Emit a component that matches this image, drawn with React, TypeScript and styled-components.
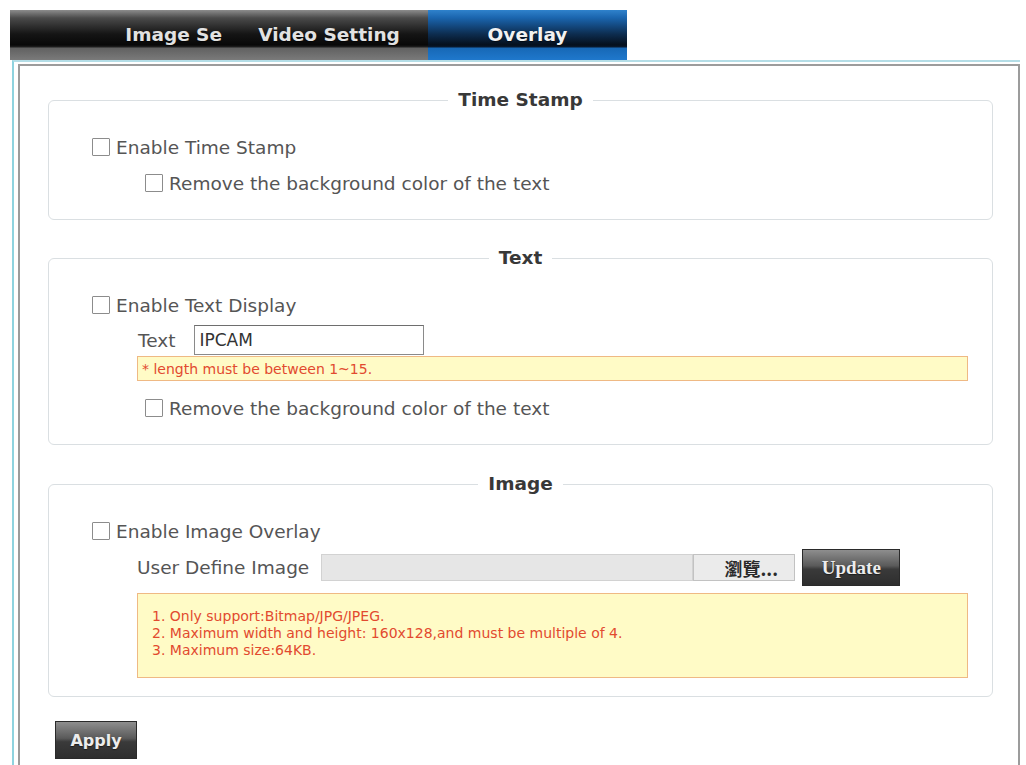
import React from "react";
import styled, { createGlobalStyle } from "styled-components";

const GlobalStyle = createGlobalStyle`
  body {
    margin: 0;
    background: #fff;
    font-family: "DejaVu Sans", Verdana, sans-serif;
  }
`;

const App: React.FC = () => {
  return (
    <>
      <GlobalStyle />
      <Page>
        <TabBar>
          <Tab $width={220} $align="flex-end">
            Image Se
          </Tab>
          <Tab $width={198}>Video Setting</Tab>
          <Tab $width={199} $active>
            Overlay
          </Tab>
        </TabBar>
        <Panel>
          <PanelInner>
            <Group>
              <Legend>Time Stamp</Legend>
              <GroupBody>
                <CheckRow>
                  <Checkbox type="checkbox" />
                  <span>Enable Time Stamp</span>
                </CheckRow>
                <CheckRow $indent={53}>
                  <Checkbox type="checkbox" />
                  <span>Remove the background color of the text</span>
                </CheckRow>
              </GroupBody>
            </Group>

            <Group $gap={27}>
              <Legend>Text</Legend>
              <GroupBody>
                <CheckRow>
                  <Checkbox type="checkbox" />
                  <span>Enable Text Display</span>
                </CheckRow>
                <FieldRow>
                  <FieldLabel $space={19}>Text</FieldLabel>
                  <TextInput defaultValue="IPCAM" />
                </FieldRow>
                <Hint>* length must be between 1~15.</Hint>
                <CheckRow $indent={53} $top={9}>
                  <Checkbox type="checkbox" />
                  <span>Remove the background color of the text</span>
                </CheckRow>
              </GroupBody>
            </Group>

            <Group $gap={28}>
              <Legend>Image</Legend>
              <GroupBody>
                <CheckRow>
                  <Checkbox type="checkbox" />
                  <span>Enable Image Overlay</span>
                </CheckRow>
                <FileRow>
                  <FieldLabel>User Define Image</FieldLabel>
                  <FileField />
                  <BrowseButton>瀏覽...</BrowseButton>
                  <UpdateButton>Update</UpdateButton>
                </FileRow>
                <Notes>
                  <div>1. Only support:Bitmap/JPG/JPEG.</div>
                  <div>
                    2. Maximum width and height: 160x128,and must be multiple
                    of 4.
                  </div>
                  <div>3. Maximum size:64KB.</div>
                </Notes>
              </GroupBody>
            </Group>

            <ApplyButton>Apply</ApplyButton>
          </PanelInner>
        </Panel>
      </Page>
    </>
  );
};

export default App;

const Page = styled.div`
  padding: 10px 6px 0 10px;
`;

const TabBar = styled.div`
  display: flex;
  width: 617px;
  height: 50px;
`;

const Tab = styled.div<{
  $width: number;
  $active?: boolean;
  $align?: string;
}>`
  display: flex;
  align-items: center;
  justify-content: ${(p) => p.$align || "center"};
  width: ${(p) => p.$width}px;
  padding-right: ${(p) => (p.$align ? "8px" : "0")};
  padding-bottom: 2px;
  box-sizing: border-box;
  overflow: hidden;
  white-space: nowrap;
  font-size: 18.5px;
  font-weight: bold;
  color: ${(p) => (p.$active ? "#f2f2f2" : "#e2e2e2")};
  text-shadow: 0 1px 1px rgba(0, 0, 0, 0.6);
  background: ${(p) =>
    p.$active
      ? `linear-gradient(
          to bottom,
          #2f82cc 0px,
          #1a64ad 8px,
          #0d2d50 24px,
          #050f1c 35px,
          #0a1a30 37px,
          #1768b6 38px,
          #1f78cc 50px
        )`
      : `linear-gradient(
          to bottom,
          #8c8c8c 0px,
          #4a4a4a 8px,
          #151515 24px,
          #080808 35px,
          #202020 37px,
          #616161 38px,
          #7a7a7a 50px
        )`};
`;

const Panel = styled.div`
  margin-left: 2px;
  border-left: 2px solid #8ed3df;
  border-top: 2px solid #b4dde6;
  padding: 2px 0 0 4px;
`;

const PanelInner = styled.div`
  border: 2px solid #9c9c9c;
  border-bottom: none;
  padding: 23px 25px 6px 28px;
`;

const Group = styled.fieldset<{ $gap?: number }>`
  margin: ${(p) => p.$gap || 0}px 0 0 0;
  padding: 18px 24px;
  border: 1px solid #dadfe2;
  border-radius: 6px;
  min-inline-size: 0;
`;

const GroupBody = styled.div`
  padding-left: 19px;
`;

const Legend = styled.legend`
  margin: 0 auto;
  padding: 0 10px;
  line-height: 22px;
  font-size: 18.5px;
  font-weight: bold;
  color: #383838;
`;

const CheckRow = styled.label<{ $indent?: number; $top?: number }>`
  display: flex;
  align-items: center;
  height: 36px;
  margin-top: ${(p) => p.$top || 0}px;
  padding-left: ${(p) => p.$indent || 0}px;
  font-size: 18.5px;
  color: #555;
`;

const Checkbox = styled.input`
  appearance: none;
  flex: none;
  width: 18px;
  height: 18px;
  margin: 0 6px 0 0;
  border: 1px solid #8c8c8c;
  border-radius: 1px;
  background: #fff;
`;

const FieldRow = styled.div`
  display: flex;
  align-items: center;
  height: 30px;
  margin-top: 2px;
  padding-left: 46px;
`;

const FieldLabel = styled.span<{ $space?: number }>`
  margin-right: ${(p) => p.$space || 12}px;
  font-size: 18.5px;
  color: #555;
  white-space: nowrap;
`;

const TextInput = styled.input`
  box-sizing: border-box;
  width: 230px;
  height: 30px;
  padding: 0 4px;
  border: 1px solid #8a8a8a;
  border-top-color: #6e6e6e;
  font-family: "DejaVu Sans", Verdana, sans-serif;
  font-size: 17px;
  color: #333;
  outline: none;
`;

const Hint = styled.div`
  display: flex;
  align-items: center;
  height: 23px;
  margin: 1px 0 0 45px;
  padding-left: 4px;
  background: #fffbc6;
  border: 1px solid #efb984;
  font-size: 14px;
  color: #e24a2f;
`;

const FileRow = styled.div`
  display: flex;
  align-items: center;
  height: 37px;
  padding-left: 45px;
`;

const FileField = styled.div`
  box-sizing: border-box;
  width: 372px;
  height: 27px;
  background: #e6e6e6;
  border: 1px solid #d2d2d2;
`;

const BrowseButton = styled.button`
  box-sizing: border-box;
  width: 102px;
  height: 27px;
  padding: 0 0 0 14px;
  background: #ebebeb;
  border: 1px solid #c2c2c2;
  font-family: "Noto Sans CJK TC", "DejaVu Sans", sans-serif;
  font-size: 18px;
  font-weight: bold;
  color: #2a2a2a;
`;

const DarkButton = styled.button`
  box-sizing: border-box;
  padding: 0;
  border: 1px solid #2a2a2a;
  background: linear-gradient(to bottom, #8e8e8e 0%, #5a5a5a 45%, #3a3a3a 55%, #2e2e2e 100%);
  color: #ececec;
  font-weight: bold;
  text-shadow: 0 1px 1px rgba(0, 0, 0, 0.5);
`;

const UpdateButton = styled(DarkButton)`
  width: 98px;
  height: 37px;
  margin-left: 7px;
  font-family: "Liberation Serif", "DejaVu Serif", serif;
  font-size: 19px;
`;

const Notes = styled.div`
  margin: 7px 0 0 45px;
  padding: 14px 14px 18px;
  background: #fffbc6;
  border: 1px solid #efb984;
  font-size: 14px;
  line-height: 17px;
  color: #e24a2f;
`;

const ApplyButton = styled(DarkButton)`
  display: block;
  width: 82px;
  height: 38px;
  margin: 24px 0 0 7px;
  font-family: "DejaVu Sans", Verdana, sans-serif;
  font-size: 16px;
`;
